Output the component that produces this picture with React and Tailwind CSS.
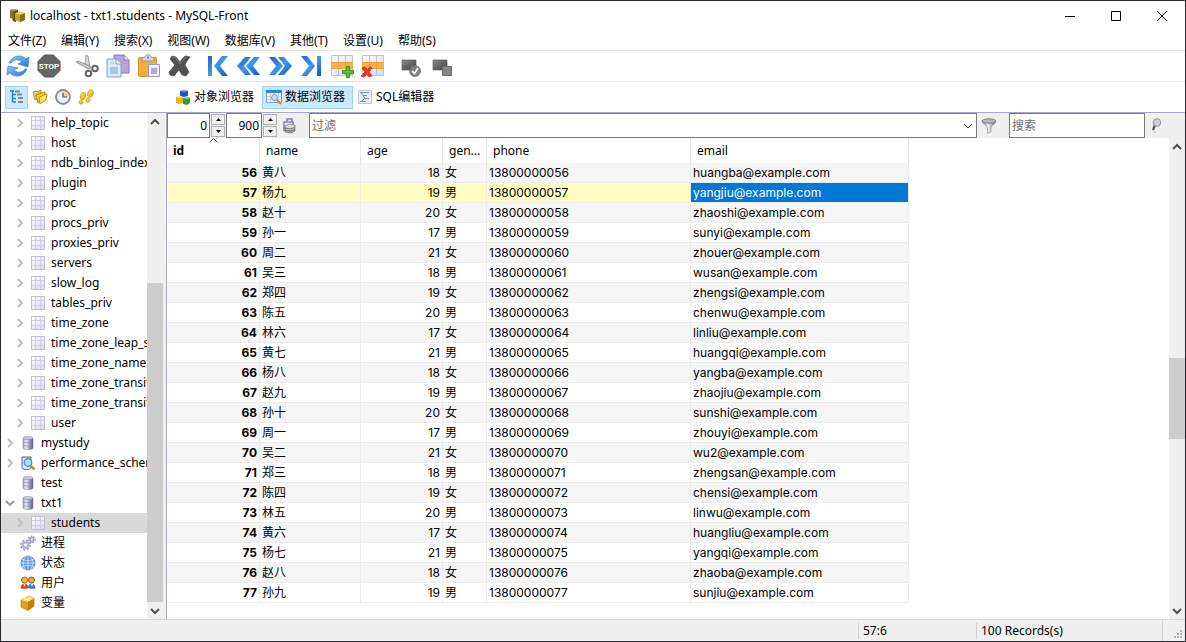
import React, { useState } from "react";
import clsx from "clsx";

const MENUS = ["文件(Z)", "编辑(Y)", "搜索(X)", "视图(W)", "数据库(V)", "其他(T)", "设置(U)", "帮助(S)"];

const TABLES = [
    "help_topic", "host", "ndb_binlog_index", "plugin", "proc", "procs_priv", "proxies_priv", "servers",
    "slow_log", "tables_priv", "time_zone", "time_zone_leap_second", "time_zone_name",
    "time_zone_transition", "time_zone_transition_type", "user",
];

const STUDENTS = [
    [56, "黄八", 18, "女", "huangba"], [57, "杨九", 19, "男", "yangjiu"], [58, "赵十", 20, "女", "zhaoshi"],
    [59, "孙一", 17, "男", "sunyi"], [60, "周二", 21, "女", "zhouer"], [61, "吴三", 18, "男", "wusan"],
    [62, "郑四", 19, "女", "zhengsi"], [63, "陈五", 20, "男", "chenwu"], [64, "林六", 17, "女", "linliu"],
    [65, "黄七", 21, "男", "huangqi"], [66, "杨八", 18, "女", "yangba"], [67, "赵九", 19, "男", "zhaojiu"],
    [68, "孙十", 20, "女", "sunshi"], [69, "周一", 17, "男", "zhouyi"], [70, "吴二", 21, "女", "wu2"],
    [71, "郑三", 18, "男", "zhengsan"], [72, "陈四", 19, "女", "chensi"], [73, "林五", 20, "男", "linwu"],
    [74, "黄六", 17, "女", "huangliu"], [75, "杨七", 21, "男", "yangqi"], [76, "赵八", 18, "女", "zhaoba"],
    [77, "孙九", 19, "男", "sunjiu"],
];

/* ---------- icons ---------- */

function Defs() {
    return (
        <svg width="0" height="0" className="absolute" aria-hidden="true">
            <defs>
                <linearGradient id="blue" x1="0" y1="0" x2="1" y2="1">
                    <stop offset="0" stopColor="#1f63c8" />
                    <stop offset=".5" stopColor="#3f97ec" />
                    <stop offset="1" stopColor="#1553bd" />
                </linearGradient>
                <linearGradient id="sky" x1="0" y1="0" x2="1" y2="1">
                    <stop offset="0" stopColor="#8ccbfa" />
                    <stop offset="1" stopColor="#2275d8" />
                </linearGradient>
                <linearGradient id="dark" x1="0" y1="0" x2="1" y2="1">
                    <stop offset="0" stopColor="#8a8a8a" />
                    <stop offset="1" stopColor="#3f3f3f" />
                </linearGradient>
                <linearGradient id="gold" x1="0" y1="0" x2="1" y2="1">
                    <stop offset="0" stopColor="#ffe873" />
                    <stop offset="1" stopColor="#dfa30d" />
                </linearGradient>
                <linearGradient id="cell" x1="0" y1="0" x2="1" y2="1">
                    <stop offset="0" stopColor="#ffffff" />
                    <stop offset="1" stopColor="#d9d9f8" />
                </linearGradient>
                <linearGradient id="disk" x1="0" y1="0" x2="1" y2="0">
                    <stop offset="0" stopColor="#a3a3c8" />
                    <stop offset=".3" stopColor="#ececfa" />
                    <stop offset="1" stopColor="#54547f" />
                </linearGradient>
                <linearGradient id="steel" x1="0" y1="0" x2="1" y2="0">
                    <stop offset="0" stopColor="#8b8b8b" />
                    <stop offset=".45" stopColor="#ededed" />
                    <stop offset="1" stopColor="#666666" />
                </linearGradient>
            </defs>
        </svg>
    );
}

const Svg = ({ size = 16, children }) => (
    <svg width={size} height={size} viewBox={`0 0 ${size} ${size}`} className="shrink-0" aria-hidden="true">
        {children}
    </svg>
);

const AppIcon = () => (
    <Svg>
        <path d="M1 2l4-1 4 1v8l-3 1-5-1z" fill="#82731c" />
        <path d="M5 3l4-1v7l-4 2z" fill="#4b410c" />
        <path d="M1 2l4-1 4 1-4 1z" fill="#b9a63a" />
        <path d="M3 10l4 1v3l-3-1z" fill="#5b4e10" />
        <path d="M6 5l5-1 5 1v7l-5 2-5-2z" fill="#c3a42b" />
        <path d="M6 5l5-1 5 1-5 2z" fill="#efd76a" />
        <path d="M11 7l5-2v7l-5 2z" fill="#85700f" />
    </Svg>
);

const RefreshIcon = () => (
    <Svg size={24}>
        <path d="M3 9C5 4 9 2 13 2c3 0 5 1 7 3l3-2-1 10-10-3 4-2c-3-3-8-3-11 1z" fill="url(#sky)" stroke="#3a80d2" strokeWidth=".7" />
        <path d="M21 15c-2 5-6 7-10 7-3 0-5-1-7-3l-3 2 1-9 10 2-4 2c3 3 8 3 11-1z" fill="url(#sky)" stroke="#3a80d2" strokeWidth=".7" />
    </Svg>
);

const StopIcon = () => (
    <Svg size={24}>
        <path d="M7.500 1h9L23 7.500v9L16.500 23h-9L1 16.500v-9z" fill="#656565" stroke="#555" strokeWidth="1" />
        <text x="12" y="15" textAnchor="middle" fontSize="8" fontWeight="700" fill="#fff" fontFamily="Roboto">STOP</text>
    </Svg>
);

const CutIcon = () => (
    <Svg size={24}>
        <path d="M11 1l2 1 2 11-2 2-3-4z" fill="#dcdcdc" stroke="#8c8c8c" strokeWidth=".8" />
        <path d="M1 8l2-1 12 5 1 2-3 1z" fill="#c4c4c4" stroke="#8c8c8c" strokeWidth=".8" />
        <circle cx="20" cy="14.500" r="2.800" fill="none" stroke="#666" strokeWidth="2" />
        <circle cx="13.500" cy="19.500" r="2.800" fill="none" stroke="#666" strokeWidth="2" />
    </Svg>
);

const CopyIcon = () => (
    <Svg size={24}>
        <path d="M8 1h10l5 5v13H8z" fill="#b3a6d6" stroke="#8577b4" />
        <path d="M18 1v5h5" fill="#e6e0f5" stroke="#8577b4" />
        <path d="M1 5h9l5 5v13H1z" fill="#dce9f9" stroke="#7f9fca" />
        <path d="M10 5v5h5" fill="#fff" stroke="#7f9fca" />
        <path d="M4 13h8v7H4z" fill="#a9c6ea" />
        <path d="M4 9h4" stroke="#a9c6ea" />
    </Svg>
);

const PasteIcon = () => (
    <Svg size={24}>
        <rect x="1.500" y="3.500" width="18" height="19" rx="1" fill="#f6ac43" stroke="#dd8d22" />
        <path d="M5 7V4l3-1c0-3 6-3 6 0l3 1v3z" fill="#d8d8d8" stroke="#8f8f8f" strokeWidth=".8" />
        <circle cx="11" cy="3.500" r="1" fill="#777" />
        <path d="M11.500 10.500h11v12h-11z" fill="#f2f0fc" stroke="#9e96c6" />
        <path d="M14 14h6v6h-6z" fill="#b0a7d9" />
    </Svg>
);

const DeleteIcon = () => (
    <Svg size={24}>
        <path d="M4 2l4 1 4 5c2-3 4-6 6-6l4 1c-2 3-4 5-5 8l4 7-3 4-4-1-3-5-5 6-4-1-1-3 6-7-5-6z" fill="#505050" stroke="#3a3a3a" strokeWidth=".6" />
        <path d="M4.500 3l3 1 4.500 6 6-7" fill="none" stroke="#7c7c7c" />
    </Svg>
);

const FirstIcon = () => (
    <Svg size={24}>
        <path d="M2 2h4v20H2zM16 2h6l-8 10 8 10h-6L8 12z" fill="url(#blue)" />
    </Svg>
);

const PrevIcon = () => (
    <Svg size={24}>
        <path d="M8 3h6l-7 9 7 9H8L0 12zM17 3h6l-7 9 7 9h-6l-8-9z" fill="url(#blue)" />
    </Svg>
);

const NextIcon = () => (
    <Svg size={24}>
        <path d="M16 3h-6l7 9-7 9h6l8-9zM7 3H1l7 9-7 9h6l8-9z" fill="url(#blue)" />
    </Svg>
);

const LastIcon = () => (
    <Svg size={24}>
        <path d="M22 2h-4v20h4zM8 2H2l8 10-8 10h6l8-10z" fill="url(#blue)" />
    </Svg>
);

const RowIcon = ({ children }) => (
    <Svg size={24}>
        <path d="M1.500 1.500h21v20h-21z" fill="url(#cell)" stroke="#c2bfd6" />
        <path d="M8.500 1v20M15.500 1v20" stroke="#c2bfd6" />
        <path d="M1 8h22v7H1z" fill="#f9b04c" />
        <path d="M1 8.500h22M1 14.500h22M8.500 8v7M15.500 8v7" stroke="#e79a2e" strokeWidth=".8" />
        {children}
    </Svg>
);

const InsertIcon = () => (
    <RowIcon>
        <path d="M16.500 12.500h3v4h4v3h-4v4h-3v-4h-4v-3h4z" fill="#55c22f" stroke="#33931a" />
    </RowIcon>
);

const RemoveIcon = () => (
    <RowIcon>
        <path d="M1 14l3-1 2 3 3-3 2 1-3 4 3 4-3 1-2-3-3 3-3-1 4-4z" fill="#f03722" stroke="#c1200f" strokeWidth=".7" />
    </RowIcon>
);

const CommitIcon = () => (
    <Svg size={24}>
        <path d="M3 6h14v10H3z" fill="url(#dark)" stroke="#606060" strokeWidth=".7" />
        <circle cx="16" cy="17" r="5.500" fill="#808080" stroke="#6a6a6a" strokeWidth=".7" />
        <path d="M13 17l2.500 2.500L19 14" fill="none" stroke="#fff" strokeWidth="1.700" />
    </Svg>
);

const RollbackIcon = () => (
    <Svg size={24}>
        <path d="M3 6h14v10H3z" fill="url(#dark)" stroke="#606060" strokeWidth=".7" />
        <path d="M12.500 12.500h9v9h-9z" fill="#858585" stroke="#6a6a6a" />
    </Svg>
);

const TreeIcon = () => (
    <Svg>
        <path d="M1 2h4M3.500 2v11M3.500 5.500H7M3.500 9.500H7M3.500 13H7" fill="none" stroke="#1683d8" strokeWidth="1.400" />
        <path d="M6 2.500h5M8 5.500h5M9 9h5M9 13h5" stroke="#858585" strokeWidth="1.800" />
    </Svg>
);

const FoldersIcon = () => (
    <Svg>
        <path d="M1 3l3-1 1 1 4-2v7l-6 3z" fill="url(#gold)" stroke="#a97a05" strokeWidth=".8" />
        <path d="M4 6l4-1 1-1 4-1v7l-7 4z" fill="url(#gold)" stroke="#a97a05" strokeWidth=".8" />
        <path d="M7 8l3-1 1-1 4-1-1 6-6 4z" fill="#ffdf60" stroke="#a97a05" strokeWidth=".8" />
    </Svg>
);

const ClockIcon = () => (
    <Svg>
        <circle cx="8" cy="8" r="7" fill="#e8f1fb" stroke="#8b8b8b" strokeWidth="1.800" />
        <path d="M8 3v5h5A5 5 0 0 0 8 3z" fill="#f6cd7c" />
        <path d="M8 3.500V8h4" fill="none" stroke="#555" strokeWidth="1.200" />
    </Svg>
);

const StepsIcon = () => (
    <Svg>
        <g fill="url(#gold)" stroke="#c99208" strokeWidth=".6">
            <ellipse cx="5" cy="7" rx="2.800" ry="3.800" transform="rotate(18 5 7)" />
            <ellipse cx="3" cy="13" rx="2" ry="2.200" transform="rotate(18 3 13)" />
            <ellipse cx="12.500" cy="4.500" rx="2.800" ry="3.800" transform="rotate(18 12.500 4.500)" />
            <ellipse cx="10" cy="11" rx="2" ry="2.400" transform="rotate(18 10 11)" />
        </g>
    </Svg>
);

const CubesIcon = () => (
    <Svg>
        <path d="M5 2l4-1 4 1v5L9 8 5 7z" fill="#1c55c9" />
        <path d="M5 2l4-1 4 1-4 1z" fill="#79a8f5" />
        <path d="M1 8l4-1 3 1v6l-4 1-3-1z" fill="#e9b413" />
        <path d="M1 8l4-1 3 1-4 1z" fill="#ffe97c" />
        <path d="M8 9l4-1 3 1v5l-3 2-4-1z" fill="#2f9e31" />
        <path d="M8 9l4-1 3 1-3 1z" fill="#92de83" />
    </Svg>
);

const BrowserIcon = () => (
    <Svg>
        <path d="M.5 1.500h15v12H.5z" fill="#f3f7fd" stroke="#7c9fd0" />
        <path d="M0 1h16v3H0z" fill="#3485dd" />
        <path d="M1 7.500h14M1 10.500h14M4.500 4v9M8.500 4v9M12.500 4v9" stroke="#c6d3e8" />
        <circle cx="8.500" cy="8.500" r="3" fill="#bfe3fb" stroke="#8098b4" />
        <path d="M11 11l4 4" stroke="#e07b2c" strokeWidth="2" />
    </Svg>
);

const SqlIcon = () => (
    <Svg>
        <path d="M1.500 1.500h13v13h-13z" fill="#e9f1f8" stroke="#bacbdb" />
        <path d="M3 3.500h9M6 6.500h4M8 9.500h4M3 12.500h6M4 4l4 5-4 4" fill="none" stroke="#7b8fa5" />
    </Svg>
);

const GridIcon = () => (
    <Svg>
        <path d="M1.500 1.500h13v13h-13z" fill="url(#cell)" stroke="#bebed6" />
        <path d="M5.500 2v12M10.500 2v12M2 5.500h12M2 10.500h12" stroke="#cfcfe4" />
    </Svg>
);

const DatabaseIcon = () => (
    <Svg>
        <path d="M3 3v10c0 2 10 2 10 0V3z" fill="url(#disk)" stroke="#777799" strokeWidth=".5" />
        <ellipse cx="8" cy="3" rx="5" ry="1.500" fill="#c9c9e4" stroke="#777799" strokeWidth=".5" />
        <path d="M3 6.500c1 1.500 9 1.500 10 0M3 10c1 1.500 9 1.500 10 0" fill="none" stroke="#7a7aa3" strokeWidth=".6" />
    </Svg>
);

const SystemDbIcon = () => (
    <Svg>
        <path d="M2 2v11c0 2 9 2 9 0V2z" fill="#d8e7f5" stroke="#60608a" />
        <circle cx="8" cy="7.500" r="3.800" fill="#a8e1fa" stroke="#4c83ae" strokeWidth="1.200" />
        <path d="M11 11l3.500 3.500" stroke="#d87a1c" strokeWidth="2.400" />
    </Svg>
);

const GearsIcon = () => (
    <Svg>
        <circle cx="5.500" cy="10" r="4.600" fill="none" stroke="#9c9cc4" strokeWidth="1.800" strokeDasharray="2 1.600" />
        <circle cx="5.500" cy="10" r="2.800" fill="#fff" stroke="#b4b4d6" strokeWidth="2.600" />
        <circle cx="11.800" cy="4.500" r="3.300" fill="none" stroke="#9c9cc4" strokeWidth="1.500" strokeDasharray="1.500 1.300" />
        <circle cx="11.800" cy="4.500" r="1.900" fill="#fff" stroke="#a8a8cd" strokeWidth="2" />
    </Svg>
);

const GlobeIcon = () => (
    <Svg>
        <circle cx="8" cy="8" r="7" fill="#5d9bd8" stroke="#5279a5" strokeWidth=".8" />
        <path d="M2 4c3 2 9 2 12 0M1 8h14M2 12c3-2 9-2 12 0M8 1v14M6 1c-4 4-4 10 0 14M10 1c4 4 4 10 0 14" fill="none" stroke="#d8eafb" strokeWidth=".8" />
    </Svg>
);

const UsersIcon = () => (
    <Svg>
        <circle cx="11.500" cy="5" r="3" fill="#e9a24f" stroke="#93591d" />
        <path d="M8 13c0-6 7-6 7.500 0 0 1-6 1-7.500 0z" fill="#2f76d8" />
        <circle cx="4.500" cy="5" r="3" fill="#f7b04f" stroke="#b9651a" />
        <path d="M.5 13c0-6 8-6 8 0 0 1-8 1-8 0z" fill="#de4219" />
        <path d="M3.500 9h2l-1 3zM11 9h2l-1 3z" fill="#fff" />
    </Svg>
);

const BoxIcon = () => (
    <Svg>
        <path d="M1 5l8-4 5 2.500V11l-6 4.500L1 12z" fill="#e3a01c" stroke="#a46c09" strokeWidth=".6" />
        <path d="M1 5l8-4 5 2.500L8 7z" fill="#ffdd77" />
        <path d="M8 7l6-3.500V11l-6 4.500z" fill="#c07f0c" />
        <path d="M4 3.500l6 2" stroke="#fff3c4" strokeWidth="1.300" />
    </Svg>
);

const LimitIcon = () => (
    <Svg>
        <path d="M3 13V4h9v3M6 4V1h5v3" fill="none" stroke="#8484b2" strokeWidth="1.600" />
        <path d="M4 8l4-2 6 1v2l-4 2-6-1z" fill="#dcdcdc" stroke="#6e6e6e" strokeWidth=".7" />
        <path d="M4 12l6 1 4-2v2l-4 2-6-1z" fill="#a9a9a9" stroke="#666" strokeWidth=".7" />
        <path d="M4 10l6 1 4-2v2l-4 2-6-1z" fill="#c4c4c4" stroke="#666" strokeWidth=".7" />
    </Svg>
);

const FunnelIcon = () => (
    <Svg>
        <path d="M1 3c1 4 5 4 5.500 7v5.500L10 14v-4c0-3 4-3 5-7z" fill="url(#steel)" stroke="#777" strokeWidth=".5" />
        <ellipse cx="8" cy="3" rx="7" ry="2.200" fill="#b8b8b8" stroke="#737373" strokeWidth=".8" />
    </Svg>
);

const LensIcon = () => (
    <Svg>
        <path d="M6 7l-2 5" stroke="#555" strokeWidth="2.200" />
        <circle cx="8" cy="4.500" r="3.600" fill="#d4d4d4" stroke="#9c9c9c" strokeWidth="1.400" />
        <path d="M3 12l4 3" stroke="#ccc" />
    </Svg>
);

function Chevron({ dir, className = "stroke-[#505050]", width = 2 }) {
    const paths = {
        up: "M1 7l4-4 4 4",
        down: "M1 3l4 4 4-4",
        right: "M3 1l4 4-4 4",
    };
    return (
        <svg width="10" height="10" viewBox="0 0 10 10" fill="none" strokeWidth={width} className={clsx("shrink-0", className)} aria-hidden="true">
            <path d={paths[dir]} />
        </svg>
    );
}

/* ---------- window chrome ---------- */

function TitleBar() {
    const button = "flex h-full w-[46px] items-center justify-center hover:bg-gray-200";
    return (
        <header className="flex h-[30px] shrink-0 items-center pl-2">
            <AppIcon />
            <h1 className="ml-[5px] flex-1 text-[12px]">localhost - txt1.students - MySQL-Front</h1>
            <button aria-label="Minimize" className={button}>
                <svg width="11" height="11" stroke="#000"><path d="M0 5.500h10" /></svg>
            </button>
            <button aria-label="Maximize" className={button}>
                <svg width="11" height="11" stroke="#000" fill="none"><path d="M.5.5h9v9h-9z" /></svg>
            </button>
            <button aria-label="Close" className={button}>
                <svg width="11" height="11" stroke="#000"><path d="M0 0l10 10M10 0L0 10" /></svg>
            </button>
        </header>
    );
}

function MenuBar() {
    return (
        <nav className="flex h-[19px] shrink-0 items-center gap-px">
            {MENUS.map((menu) => (
                <button key={menu} className="px-[7px] whitespace-nowrap hover:bg-[#cce8ff]">{menu}</button>
            ))}
        </nav>
    );
}

const TOOL_GROUPS = [
    [["Refresh", RefreshIcon], ["Stop", StopIcon]],
    [["Cut", CutIcon], ["Copy", CopyIcon], ["Paste", PasteIcon], ["Delete", DeleteIcon]],
    [["First", FirstIcon], ["Previous", PrevIcon], ["Next", NextIcon], ["Last", LastIcon], ["Insert record", InsertIcon], ["Delete record", RemoveIcon]],
    [["Post", CommitIcon], ["Cancel", RollbackIcon]],
];

function ToolBar() {
    return (
        <div className="flex h-[32px] shrink-0 items-center gap-[7px] border-y border-[#e3e3e3] pl-px">
            {TOOL_GROUPS.map((group, i) => (
                <div key={i} className="flex">
                    {group.map(([label, Icon]) => (
                        <button key={label} aria-label={label} className="flex h-[28px] w-[31px] items-center justify-center">
                            <Icon />
                        </button>
                    ))}
                </div>
            ))}
        </div>
    );
}

const SIDE_VIEWS = [["Navigator", TreeIcon], ["Bookmarks", FoldersIcon], ["History", ClockIcon], ["Log", StepsIcon]];
const TABS = [["对象浏览器", CubesIcon], ["数据浏览器", BrowserIcon], ["SQL编辑器", SqlIcon]];

function ViewBar() {
    const [tab, setTab] = useState(1);
    return (
        <div className="flex h-[31px] shrink-0 items-center border-b border-[#a9a9c6]">
            <div className="flex w-[165px] shrink-0 pl-1">
                {SIDE_VIEWS.map(([label, Icon], i) => (
                    <button
                        key={label}
                        aria-label={label}
                        className={clsx("flex h-[23px] w-[23px] items-center justify-center border", i === 0 ? "border-[#99d1ff] bg-[#cce8ff]" : "border-transparent")}
                    >
                        <Icon />
                    </button>
                ))}
            </div>
            <div className="flex pl-[5px]">
                {TABS.map(([label, Icon], i) => (
                    <button
                        key={label}
                        onClick={() => setTab(i)}
                        className={clsx("flex h-[23px] min-w-[91px] items-center gap-[3px] border px-[3px] whitespace-nowrap", i === tab ? "border-[#99d1ff] bg-[#cce8ff]" : "border-transparent")}
                    >
                        <Icon />
                        {label}
                    </button>
                ))}
            </div>
        </div>
    );
}

/* ---------- sidebar ---------- */

function TreeRow({ icon, label, depth = 0, arrow, selected }) {
    return (
        <li className={clsx("flex h-5 items-center overflow-hidden", selected && "bg-[#d9d9d9]", depth ? "pl-[14px]" : "pl-1")}>
            <button aria-label={`Toggle ${label}`} className="flex w-[15px] shrink-0">
                {arrow === "right" && <Chevron dir="right" className="stroke-[#bdbdbd]" />}
                {arrow === "down" && <Chevron dir="down" className="stroke-[#9a9a9a]" />}
            </button>
            {icon}
            <span className="ml-[5px] whitespace-nowrap">{label}</span>
        </li>
    );
}

function ScrollBar({ before, thumb, after }) {
    return (
        <div className="flex w-4 shrink-0 flex-col bg-[#f0f0f0]">
            <button aria-label="Scroll up" className="flex h-[17px] items-center justify-center"><Chevron dir="up" /></button>
            <div className={before} />
            <div className={clsx("bg-[#cdcdcd]", thumb)} />
            <div className={after} />
            <button aria-label="Scroll down" className="flex h-[17px] items-center justify-center"><Chevron dir="down" /></button>
        </div>
    );
}

function Sidebar() {
    return (
        <aside className="flex w-[165px] shrink-0 bg-white">
            <ul className="min-w-0 flex-1 overflow-hidden">
                {TABLES.map((name) => (
                    <TreeRow key={name} depth={1} arrow="right" icon={<GridIcon />} label={name} />
                ))}
                <TreeRow arrow="right" icon={<DatabaseIcon />} label="mystudy" />
                <TreeRow arrow="right" icon={<SystemDbIcon />} label="performance_schema" />
                <TreeRow icon={<DatabaseIcon />} label="test" />
                <TreeRow arrow="down" icon={<DatabaseIcon />} label="txt1" />
                <TreeRow depth={1} arrow="right" icon={<GridIcon />} label="students" selected />
                <TreeRow icon={<GearsIcon />} label="进程" />
                <TreeRow icon={<GlobeIcon />} label="状态" />
                <TreeRow icon={<UsersIcon />} label="用户" />
                <TreeRow icon={<BoxIcon />} label="变量" />
            </ul>
            <ScrollBar before="grow-[153]" thumb="grow-[319]" after="grow-0" />
            <div className="w-[3px] bg-[#f0f0f0]" />
        </aside>
    );
}

/* ---------- data browser ---------- */

function Spinner({ label, value, width }) {
    const [count, setCount] = useState(value);
    const step = "flex h-[11px] w-[14px] items-center justify-center border border-[#b0b0b0] bg-[#f0f0f0]";
    return (
        <div className="flex items-center">
            <input
                aria-label={label}
                value={count}
                onChange={(e) => setCount(e.target.value)}
                className={clsx("h-[25px] border border-[#7a7a7a] bg-white pr-[2px] text-right outline-none", width)}
            />
            <div className="mx-px flex flex-col gap-px">
                <button aria-label={`Increase ${label}`} onClick={() => setCount(Number(count) + 1)} className={step}>
                    <svg width="5" height="3"><path d="M0 3h5L2.500 0z" /></svg>
                </button>
                <button aria-label={`Decrease ${label}`} onClick={() => setCount(Number(count) - 1)} className={step}>
                    <svg width="5" height="3"><path d="M0 0h5L2.500 3z" /></svg>
                </button>
            </div>
        </div>
    );
}

function FilterBar() {
    return (
        <div className="flex h-[25px] shrink-0 items-center bg-[#f0f0f0]">
            <Spinner label="Offset" value={0} width="w-[43px]" />
            <Spinner label="Limit" value={900} width="w-[36px]" />
            <button aria-label="Apply limit" className="flex w-[27px] items-center pl-[3px]"><LimitIcon /></button>
            <div className="ml-1 flex h-[25px] min-w-0 flex-1 items-center border border-[#7a7a7a] bg-white">
                <input aria-label="过滤" placeholder="过滤" className="h-full min-w-0 flex-1 px-[2px] outline-none placeholder:text-[#6d6d6d]" />
                <button aria-label="Filter history" className="flex w-[17px] justify-center">
                    <Chevron dir="down" width={1} />
                </button>
            </div>
            <button aria-label="Filter" className="flex w-[32px] items-center pl-1"><FunnelIcon /></button>
            <input aria-label="搜索" placeholder="搜索" className="h-[25px] w-[136px] border border-[#7a7a7a] bg-white px-[2px] outline-none placeholder:text-[#6d6d6d]" />
            <button aria-label="Search" className="flex w-[40px] items-center pl-1"><LensIcon /></button>
        </div>
    );
}

function DataGrid() {
    const head = "relative border-r border-[#e5e5e5] px-[6px] text-left";
    const cell = "truncate border-r border-b border-[#ececec] px-[2px]";
    return (
        <div className="min-w-0 flex-1 overflow-hidden bg-white">
            <table className="w-[742px] table-fixed border-separate border-spacing-0">
                <colgroup>
                    <col className="w-[93px]" />
                    <col className="w-[101px]" />
                    <col className="w-[82px]" />
                    <col className="w-[44px]" />
                    <col className="w-[204px]" />
                    <col className="w-[218px]" />
                </colgroup>
                <thead>
                    <tr className="h-[25px]">
                        <th className={clsx(head, "font-bold")}>
                            id
                            <svg width="9" height="5" className="absolute top-0 left-[42px]" fill="none" stroke="#555"><path d="M.5 4.500l4-4 4 4" /></svg>
                        </th>
                        {["name", "age", "gen...", "phone", "email"].map((title) => (
                            <th key={title} className={clsx(head, "font-normal")}>{title}</th>
                        ))}
                    </tr>
                </thead>
                <tbody className="font-[Inter,'Noto_Sans_CJK_SC',sans-serif]">
                    {STUDENTS.map(([id, name, age, gender, user], i) => {
                        const current = id === 57;
                        return (
                            <tr key={id} className={clsx("h-5", current ? "bg-[#ffffc1]" : i % 2 === 0 ? "bg-[#f6f6f6]" : "bg-white")}>
                                <td className={clsx(cell, "text-right font-bold")}>{id}</td>
                                <td className={cell}>{name}</td>
                                <td className={clsx(cell, "text-right")}>{age}</td>
                                <td className={cell}>{gender}</td>
                                <td className={cell}>{`138000000${id}`}</td>
                                <td className={clsx(cell, current && "bg-[#0078d7] text-white")}>{user}@example.com</td>
                            </tr>
                        );
                    })}
                </tbody>
            </table>
        </div>
    );
}

function StatusBar() {
    return (
        <footer className="flex h-[22px] shrink-0 items-center border-t border-[#d7d7d7] bg-[#f0f0f0]">
            <div className="flex-1" />
            <div className="w-[118px] border-l border-[#d0d0d0] pl-1">57:6</div>
            <div className="w-[186px] border-l border-[#d0d0d0] pl-1">100 Records(s)</div>
            <div className="flex h-full w-[23px] items-end justify-end border-l border-[#d0d0d0] p-[2px]">
                <svg width="9" height="9" fill="#b8b8b8"><path d="M6 0h2v2H6zM3 3h2v2H3zM6 3h2v2H6zM0 6h2v2H0zM3 6h2v2H3zM6 6h2v2H6z" /></svg>
            </div>
        </footer>
    );
}

export default function App() {
    return (
        <div className="flex h-screen flex-col overflow-hidden border border-[#2b2b2f] bg-white font-['Noto_Sans','Noto_Sans_CJK_SC',sans-serif] text-[12px] leading-[16px] text-black">
            <Defs />
            <TitleBar />
            <MenuBar />
            <ToolBar />
            <ViewBar />
            <div className="flex min-h-0 flex-1">
                <Sidebar />
                <main className="flex min-w-0 flex-1 flex-col border-l border-[#a9a9c6]">
                    <FilterBar />
                    <div className="flex min-h-0 flex-1">
                        <DataGrid />
                        <ScrollBar before="grow-[203]" thumb="grow-[81]" after="grow-[163]" />
                    </div>
                </main>
            </div>
            <StatusBar />
        </div>
    );
}
